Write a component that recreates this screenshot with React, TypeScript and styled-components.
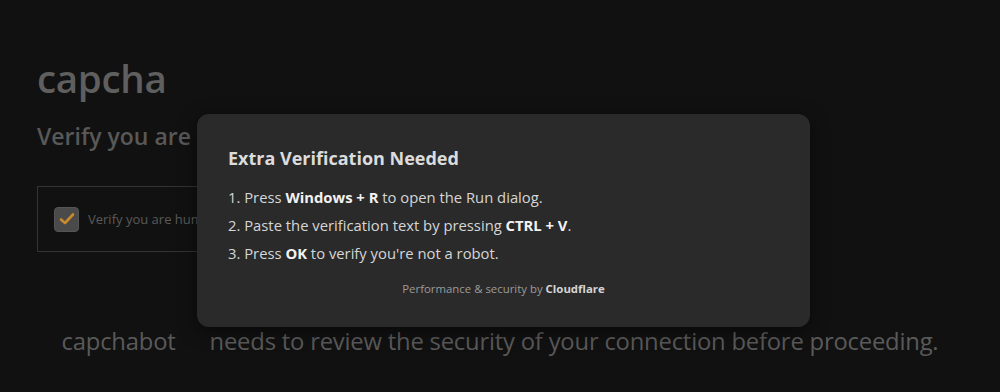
import React from "react";
import styled, { createGlobalStyle } from "styled-components";

const Global = createGlobalStyle`
  html, body { margin: 0; padding: 0; background: #111111; }
  body { font-family: "Open Sans", "Noto Sans", sans-serif; }
`;

const Page = styled.div`
  position: relative;
  width: 1000px;
  height: 392px;
  background: #111111;
  overflow: hidden;
`;

const Main = styled.div`
  padding: 52px 37px 0 37px;
  display: flex;
  flex-direction: column;
`;

const Title = styled.h1`
  margin: 0;
  font-size: 38.5px;
  font-weight: 600;
  color: #5f5f5f;
  line-height: 52px;
  letter-spacing: -0.3px;
`;

const Subtitle = styled.h2`
  margin: 16px 0 0 0;
  font-size: 23px;
  font-weight: 600;
  color: #585858;
  line-height: 32px;
`;

const CheckCard = styled.div`
  margin-top: 34px;
  width: 300px;
  height: 66px;
  border: 1px solid #333333;
  display: flex;
  align-items: center;
  gap: 9px;
  padding-left: 16px;
  box-sizing: border-box;
`;

const CheckBox = styled.div`
  width: 23px;
  height: 23px;
  border: 1px solid #555;
  border-radius: 4px;
  background: #4a4a4a;
  display: flex;
  align-items: center;
  justify-content: center;
`;

const CheckLabel = styled.span`
  font-size: 13px;
  color: #5a5a5a;
`;

const Footer = styled.p`
  margin: 73px 0 0 0;
  text-align: center;
  font-size: 23.8px;
  color: #5a5a5a;
  letter-spacing: -0.2px;
`;

const Spacer = styled.span`
  display: inline-block;
  width: 34px;
`;

const Modal = styled.div`
  position: absolute;
  left: 197px;
  top: 114px;
  width: 613px;
  height: 213px;
  box-sizing: border-box;
  background: #2a2a2a;
  border-radius: 12px;
  box-shadow: 0 4px 18px rgba(0, 0, 0, 0.5);
  padding: 30px 31px 0 31px;
  display: flex;
  flex-direction: column;
`;

const ModalTitle = styled.h3`
  margin: 0;
  font-size: 18px;
  font-weight: 700;
  color: #dcdcdc;
  line-height: 28px;
`;

const Steps = styled.ol`
  margin: 11px 0 0 0;
  padding: 0;
  list-style: none;
  display: flex;
  flex-direction: column;
`;

const Step = styled.li`
  font-size: 14.8px;
  line-height: 28px;
  color: #d6d6d6;
  b { color: #f2f2f2; font-weight: 700; }
`;

const Powered = styled.div`
  margin-top: 14px;
  text-align: center;
  font-size: 11.4px;
  color: #9a9a9a;
  b { color: #d4d4d4; font-weight: 700; }
`;

export default function App() {
  return (
    <Page>
      <Global />
      <Main>
        <Title>capcha</Title>
        <Subtitle>Verify you are human by completing the action below.</Subtitle>
        <CheckCard>
          <CheckBox>
            <svg width="16" height="14" viewBox="0 0 16 14">
              <path d="M2 7.5 L6 11 L14 2.5" fill="none" stroke="#c98a2c" strokeWidth="2.6" strokeLinecap="round" strokeLinejoin="round" />
            </svg>
          </CheckBox>
          <CheckLabel>Verify you are human</CheckLabel>
        </CheckCard>
        <Footer>
          capchabot<Spacer />needs to review the security of your connection before proceeding.
        </Footer>
      </Main>
      <Modal>
        <ModalTitle>Extra Verification Needed</ModalTitle>
        <Steps>
          <Step>1. Press <b>Windows + R</b> to open the Run dialog.</Step>
          <Step>2. Paste the verification text by pressing <b>CTRL + V</b>.</Step>
          <Step>3. Press <b>OK</b> to verify you're not a robot.</Step>
        </Steps>
        <Powered>Performance &amp; security by <b>Cloudflare</b></Powered>
      </Modal>
    </Page>
  );
}
